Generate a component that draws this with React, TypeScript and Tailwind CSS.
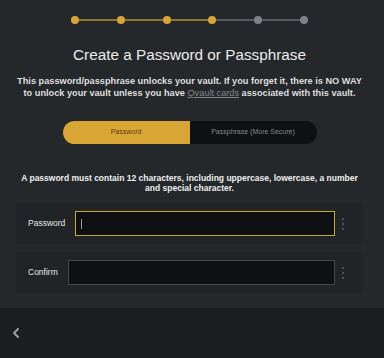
const steps = [true, true, true, true, false, false];

function Stepper() {
  return (
    <div className="flex items-center w-[237px] mx-auto">
      {steps.map((done, i) => (
        <div key={i} className={i === 0 ? "flex items-center" : "flex items-center flex-1"}>
          {i > 0 && (
            <div className={`flex-1 h-[2px] ${steps[i] ? "bg-[#8c7636]" : "bg-[#565a5e]"}`} />
          )}
          <div className={`w-2 h-2 rounded-full ${done ? "bg-[#d9a534]" : "bg-[#7c8288]"}`} />
        </div>
      ))}
    </div>
  );
}

function Field({ label, active }: { label: string; active?: boolean }) {
  return (
    <div className="flex items-center bg-[#212427] h-[41px] pl-3 pr-[19px]">
      <span className="text-[8.5px] text-[#e4e4e4] mr-[10px]">{label}</span>
      <div
        className={`flex-1 h-[25px] bg-[#0e1011] flex items-center pl-[5px] border ${
          active ? "border-[#c6a72f]" : "border-[#45494c]"
        }`}
      >
        {active && <div className="w-px h-[10px] bg-[#9a9a9a]" />}
      </div>
      <div className="flex flex-col gap-[3px] ml-[7px]">
        <div className="w-[2px] h-[2px] rounded-full bg-[#5d6165]" />
        <div className="w-[2px] h-[2px] rounded-full bg-[#5d6165]" />
        <div className="w-[2px] h-[2px] rounded-full bg-[#5d6165]" />
      </div>
    </div>
  );
}

export default function App() {
  return (
    <div
      className="w-[384px] h-[358px] bg-[#25282b] flex flex-col overflow-hidden"
      style={{ fontFamily: '"Liberation Sans", Arial, sans-serif' }}
    >
      <div className="h-[308px] pr-[5px] flex flex-col">
        <div className="pt-4">
          <Stepper />
        </div>
        <h1 className="text-center text-[15.3px] leading-[18px] text-[#ebebeb] mt-[22px]">
          Create a Password or Passphrase
        </h1>
        <p className="text-center text-[9.2px] leading-[12px] font-bold text-[#dedede] mt-[11px] whitespace-nowrap">
          This password/passphrase unlocks your vault. If you forget it, there is NO WAY
          <br />
          to unlock your vault unless you have{" "}
          <span className="underline text-[#80858a] font-normal">Qvault cards</span> associated with
          this vault.
        </p>
        <div className="flex w-[254px] h-[23px] mx-auto mt-[22px] rounded-full overflow-hidden bg-[#0e1011]">
          <div className="flex-1 bg-[#d9a534] flex items-center justify-center text-[7px] text-[#5b4110]">
            Password
          </div>
          <div className="flex-1 flex items-center justify-center text-[7px] text-[#868a8e]">
            Passphrase (More Secure)
          </div>
        </div>
        <p className="text-center text-[8.5px] leading-[10px] font-bold text-[#eeeeee] mt-[29px] whitespace-nowrap">
          A password must contain 12 characters, including uppercase, lowercase, a number
          <br />
          and special character.
        </p>
        <div className="mx-[16px] mt-[10px] flex flex-col gap-[8px]">
          <Field label="Password" active />
          <Field label="Confirm" />
        </div>
      </div>
      <div className="flex-1 bg-[#1b1e20] flex items-center pl-[12px]">
        <svg width="8" height="10" viewBox="0 0 8 10" fill="none">
          <path d="M6 1 L2 5 L6 9" stroke="#9da2a6" strokeWidth="1.8" strokeLinecap="round" strokeLinejoin="round" />
        </svg>
      </div>
    </div>
  );
}
